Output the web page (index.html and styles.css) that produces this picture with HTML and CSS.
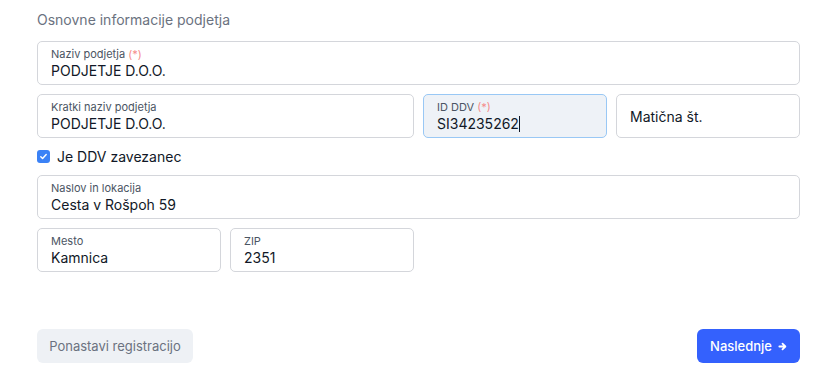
FILE: index.html
```html
<!DOCTYPE html>
<html lang="sl">
<head>
     <meta charset="UTF-8">
     <meta name="viewport" content="width=device-width, initial-scale=1.0">
     <title>Registracija podjetja</title>
     <link rel="stylesheet" href="styles.css">
</head>
<body>
     <div class="wrapper">
          <h2 class="section-title">Osnovne informacije podjetja</h2>
          <!-- osnovni podatki -->
          <div class="form-grid">
               <div class="field span-4">
                    <span class="label">Naziv podjetja <em>(*)</em></span>
                    <span class="value">PODJETJE D.O.O.</span>
               </div>
               <div class="field span-2">
                    <span class="label">Kratki naziv podjetja</span>
                    <span class="value">PODJETJE D.O.O.</span>
               </div>
               <div class="field focused">
                    <span class="label">ID DDV <em>(*)</em></span>
                    <span class="value">SI34235262<i class="caret"></i></span>
               </div>
               <div class="field empty">
                    <span class="value">Matična št.</span>
               </div>
               <label class="check span-4">
                    <span class="box">
                         <svg width="9" height="9" viewBox="0 0 10 10"><path d="M2 5.2l2 2 4-4.4" fill="none" stroke="#fff" stroke-width="1.6" stroke-linecap="round" stroke-linejoin="round"/></svg>
                    </span>
                    Je DDV zavezanec
               </label>
               <div class="field span-4">
                    <span class="label">Naslov in lokacija</span>
                    <span class="value">Cesta v Rošpoh 59</span>
               </div>
               <div class="field">
                    <span class="label">Mesto</span>
                    <span class="value">Kamnica</span>
               </div>
               <div class="field">
                    <span class="label">ZIP</span>
                    <span class="value">2351</span>
               </div>
          </div>
          <div class="actions">
               <button class="btn-reset">Ponastavi registracijo</button>
               <button class="btn-next">Naslednje
                    <svg width="9" height="9" viewBox="0 0 10 10"><path d="M1.5 5h6.5M5 1.8L8.2 5 5 8.2" fill="none" stroke="#fff" stroke-width="2" stroke-linecap="round" stroke-linejoin="round"/></svg>
               </button>
          </div>
     </div>
</body>
</html>
```

FILE: styles.css
```css
body{
     margin: 0;
     background: #ffffff;
     font-family: Inter, "Noto Sans", sans-serif;
     color: #111827;
}
.wrapper{
     width: 763px;
     padding: 10px 36px 0 37px;
}
.section-title{
     margin: 0;
     height: 20px;
     font-size: 14px;
     line-height: 20px;
     font-weight: 400;
     color: #6b7280;
}
.form-grid{
     display: grid;
     grid-template-columns: repeat(4, 1fr);
     gap: 9px;
     margin-top: 11px;
}
.span-2{
     grid-column: span 2;
}
.span-4{
     grid-column: span 4;
}
.field{
     height: 44px;
     box-sizing: border-box;
     border: 1px solid #d4d6db;
     border-radius: 5px;
     padding: 5px 13px 0;
     display: flex;
     flex-direction: column;
}
.field.focused{
     background: #eef2f7;
     border-color: #99c8f5;
}
.field.empty{
     justify-content: center;
     padding-top: 0;
}
.label{
     font-size: 11px;
     line-height: 15px;
     color: #4b5563;
}
.label em{
     font-style: normal;
     color: #f58b8b;
}
.value{
     font-size: 14px;
     line-height: 17px;
     color: #111827;
}
.caret{
     display: inline-block;
     width: 1px;
     height: 16px;
     background: #111827;
     vertical-align: -3px;
}
.check{
     height: 19px;
     display: flex;
     align-items: center;
     gap: 7px;
     font-size: 14px;
     color: #111827;
}
.check .box{
     width: 13px;
     height: 13px;
     border-radius: 3px;
     background: #3b82f6;
     display: flex;
     align-items: center;
     justify-content: center;
}
.actions{
     display: flex;
     justify-content: space-between;
     margin-top: 57px;
}
.actions button{
     height: 34px;
     border: none;
     border-radius: 6px;
     font-family: Inter, "Noto Sans", sans-serif;
     font-size: 13px;
     padding: 0;
     white-space: nowrap;
     display: flex;
     align-items: center;
     justify-content: center;
     gap: 6px;
}
.btn-reset{
     width: 156px;
     background: #eef1f5;
     color: #6b7280;
}
.btn-next{
     width: 103px;
     background: #3461fd;
     color: #ffffff;
     font-weight: 500;
}
```
